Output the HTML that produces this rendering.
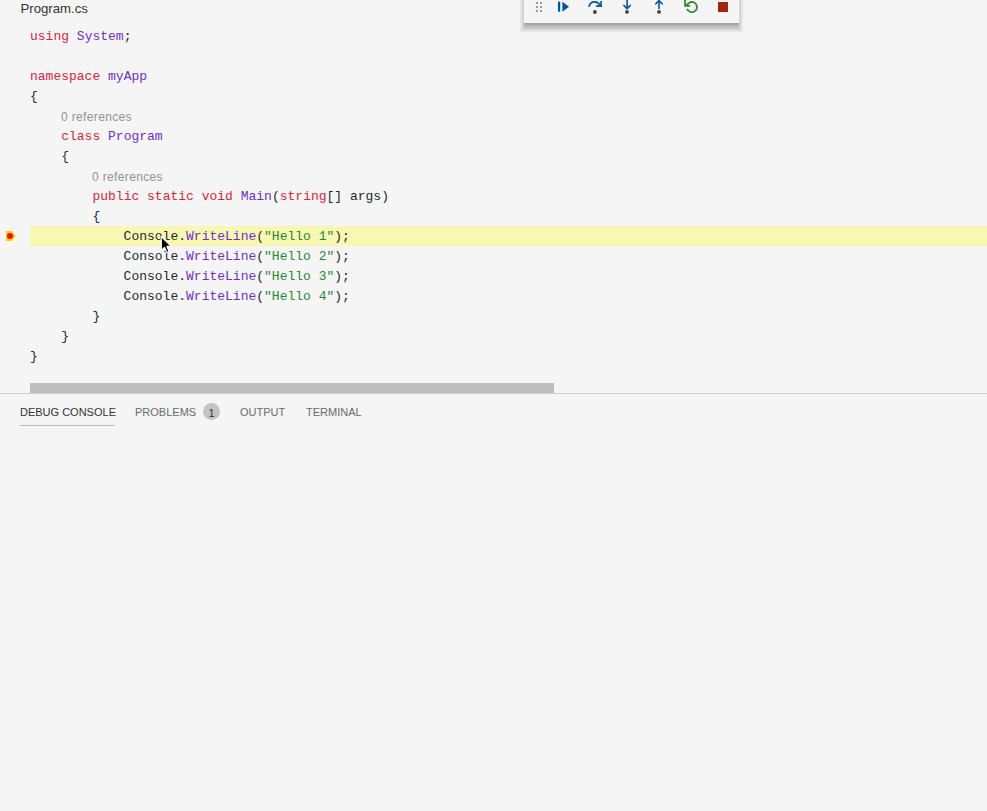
<!DOCTYPE html>
<html><head><meta charset="utf-8">
<style>
html,body{margin:0;padding:0;}
body{width:987px;height:811px;background:#f5f5f5;position:relative;overflow:hidden;font-family:"Liberation Sans",sans-serif;}
.title{position:absolute;left:20.5px;top:0px;font-size:13.2px;line-height:17px;color:#333;}
.code{position:absolute;left:30px;top:27px;font-family:"Liberation Mono",monospace;font-size:13px;line-height:20px;color:#24292e;white-space:pre;}
.ln{height:20px;}
.lens{font-family:"Liberation Sans",sans-serif;font-size:12px;color:#929292;letter-spacing:0.35px;}
.k{color:#d7263d;}
.t{color:#6c30c9;}
.s{color:#1f8a30;}
.hl{position:absolute;left:30px;top:226px;width:957px;height:20px;background:#f8f8b2;}
.sb{position:absolute;left:30px;top:383px;width:524px;height:10px;background:#bdbdbd;}
.sep{position:absolute;left:0;top:393px;width:987px;height:1px;background:#cfcfcf;}
.tab{position:absolute;top:404px;font-size:11px;line-height:16px;color:#6a6a6a;}
.tab.act{color:#333;}
.ul{position:absolute;left:20px;top:425px;width:95px;height:1px;background:#b9b9b9;}
.badge{position:absolute;left:203px;top:403px;width:17px;height:17px;border-radius:50%;background:#c4c4c4;color:#333;font-size:11px;line-height:20px;text-align:center;}
.bp{position:absolute;left:6px;top:231px;}
.tb{position:absolute;left:524px;top:-10px;width:215px;height:33px;background:#f5f5f5;box-shadow:inset 0 -1px 0 #f8f8f8,inset 1px 0 0 #f8f8f8,inset -1px 0 0 #f8f8f8,0 2px 0.5px rgba(0,0,0,0.10),0 4px 0.5px rgba(0,0,0,0.076),0 6px 0.5px rgba(0,0,0,0.055),0 5px 0.8px 2px rgba(0,0,0,0.08),0 5px 1px 4px rgba(0,0,0,0.057);}
.tbi{position:absolute;left:520px;top:0;}
</style></head><body>
<div class="title">Program.cs</div>
<div class="hl"></div>
<div class="code"><div class="ln"><span class="k">using</span> <span class="t">System</span>;</div><div class="ln"></div><div class="ln"><span class="k">namespace</span> <span class="t">myApp</span></div><div class="ln">{</div><div class="ln lens" style="padding-left:31px">0 references</div><div class="ln">    <span class="k">class</span> <span class="t">Program</span></div><div class="ln">    {</div><div class="ln lens" style="padding-left:62px">0 references</div><div class="ln">        <span class="k">public</span> <span class="k">static</span> <span class="k">void</span> <span class="t">Main</span>(<span class="k">string</span>[] args)</div><div class="ln">        {</div><div class="ln">            Console.<span class="t">WriteLine</span>(<span class="s">"Hello 1"</span>);</div><div class="ln">            Console.<span class="t">WriteLine</span>(<span class="s">"Hello 2"</span>);</div><div class="ln">            Console.<span class="t">WriteLine</span>(<span class="s">"Hello 3"</span>);</div><div class="ln">            Console.<span class="t">WriteLine</span>(<span class="s">"Hello 4"</span>);</div><div class="ln">        }</div><div class="ln">    }</div><div class="ln">}</div></div>
<div class="sb"></div>
<div class="sep"></div>
<div class="tab act" style="left:20px">DEBUG CONSOLE</div>
<div class="ul"></div>
<div class="tab" style="left:135px">PROBLEMS</div>
<div class="badge">1</div>
<div class="tab" style="left:240px">OUTPUT</div>
<div class="tab" style="left:306px">TERMINAL</div>
<svg class="bp" width="10" height="10" viewBox="0 0 10 10"><path d="M0 0H6L9.6 5L6 10H0Z" fill="#ffcc00"/><circle cx="4" cy="5" r="3" fill="#e51400"/></svg>
<svg style="position:absolute;left:159px;top:234px" width="16" height="22" viewBox="0 0 16 22"><path d="M2.3 2.5V16.4L5.5 13.3L7.9 18.6L10.1 17.6L7.8 12.4H12.2Z" fill="#000" stroke="#fff" stroke-width="1.1" stroke-linejoin="round"/></svg>
<div class="tb"></div>
<svg class="tbi" width="230" height="20" viewBox="520 0 230 20">
<g fill="#9a9a9a"><rect x="536" y="2" width="2" height="2"/><rect x="540" y="2" width="2" height="2"/><rect x="536" y="6" width="2" height="2"/><rect x="540" y="6" width="2" height="2"/><rect x="536" y="10" width="2" height="2"/><rect x="540" y="10" width="2" height="2"/></g>
<g fill="#00539c"><rect x="558" y="1.7" width="2.2" height="10"/><path d="M562.4 1.7L569 6.7L562.4 11.7Z"/></g>
<path d="M588.9 6.8C589.6 3 592.5 1.9 594.8 1.9C597 1.9 598.9 3.2 600.3 5.4" fill="none" stroke="#00539c" stroke-width="1.7"/>
<path d="M601.1 1.1V6.1H596" fill="none" stroke="#00539c" stroke-width="1.6"/>
<g fill="#424242"><circle cx="594.9" cy="12" r="1.9"/><circle cx="627" cy="11.9" r="1.9"/><circle cx="659" cy="11.9" r="1.9"/></g>
<g fill="none" stroke="#00539c" stroke-width="1.6"><path d="M627.1 0V8"/><path d="M623.4 5L627.1 8.6L630.8 5"/><path d="M659 1V9"/><path d="M655.3 4.2L659 0.6L662.7 4.2"/></g>
<path d="M687.1 8.84A5.1 5.1 0 1 0 689.35 2.68L686 5.3" fill="none" stroke="#388a34" stroke-width="1.8"/>
<path d="M685 0V5.8H690" fill="none" stroke="#388a34" stroke-width="1.8"/>
<rect x="718" y="2" width="10" height="10" fill="#a1260d"/>
</svg>
</body></html>
